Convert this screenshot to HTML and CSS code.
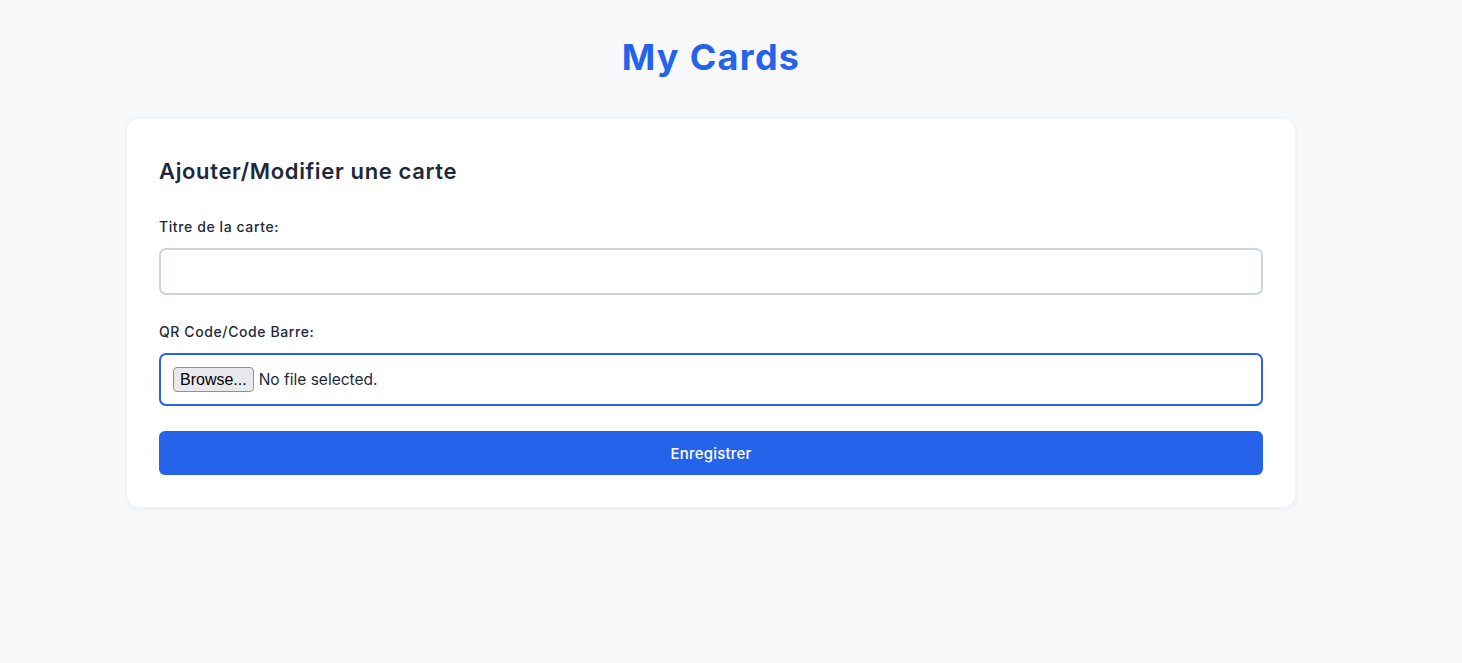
FILE: index.html
```html
<!DOCTYPE html>
<html lang="fr">
<head>
<meta charset="utf-8">
<title>My Cards</title>
<link rel="stylesheet" href="styles.css">
</head>
<body>
<main class="page">
  <h1 class="page-title">My Cards</h1>
  <section class="card">
    <h2 class="card-title">Ajouter/Modifier une carte</h2>
    <form class="form">
      <div class="field field-title">
        <label class="label" for="title">Titre de la carte:</label>
        <input class="text-input" id="title" type="text">
      </div>
      <div class="field field-file">
        <label class="label">QR Code/Code Barre:</label>
        <div class="file-input">
          <span class="browse-btn">Browse...</span>
          <span class="file-status">No file selected.</span>
        </div>
      </div>
      <button class="submit" type="button">Enregistrer</button>
    </form>
  </section>
</main>
</body>
</html>
```
FILE: styles.css
```css
* { box-sizing: border-box; }

html, body {
  margin: 0;
  padding: 0;
  background: #f8f9fb;
  font-family: Inter, "Noto Sans", "Liberation Sans", sans-serif;
  color: #1e293b;
}

.page {
  padding: 37px 40px 40px 0;
}

.page-title {
  margin: 0;
  text-align: center;
  font-size: 36px;
  line-height: 40px;
  font-weight: 700;
  letter-spacing: 1.3px;
  color: #2563eb;
  width: 1422px;
}

.card {
  width: 1168px;
  margin: 42px 0 0 127px;
  background: #ffffff;
  border-radius: 12px;
  padding: 32px;
  box-shadow: 0 1px 6px rgba(15, 23, 42, 0.07);
}

.card-title {
  margin: 0 0 26px;
  font-size: 22px;
  line-height: 40px;
  font-weight: 600;
  letter-spacing: 0.65px;
  color: #1e293b;
}

.form {
  display: flex;
  flex-direction: column;
}

.field {
  display: flex;
  flex-direction: column;
}

.field-title {
  margin-bottom: 27px;
}

.field-file {
  margin-bottom: 24px;
}

.label {
  font-size: 14px;
  line-height: 20px;
  font-weight: 500;
  letter-spacing: 0.6px;
  color: #1e293b;
  margin-bottom: 11px;
}

.text-input {
  height: 47px;
  width: 100%;
  border: 2px solid #cbd5e1;
  border-radius: 7px;
  background: #fff;
  font-family: inherit;
  font-size: 15px;
  padding: 0 12px;
  outline: none;
}

.file-input {
  height: 53px;
  border: 2px solid #2563eb;
  border-radius: 7px;
  background: #fff;
  display: flex;
  align-items: center;
  padding: 0 12px;
  gap: 5px;
}

.browse-btn {
  display: inline-flex;
  align-items: center;
  height: 25px;
  padding: 0 6px;
  background: #e9e9ed;
  border: 1px solid #8f8f9d;
  border-radius: 4px;
  font-family: "Liberation Sans", Arial, sans-serif;
  font-size: 16px;
  color: #000;
}

.file-status {
  font-size: 15.5px;
  color: #1e293b;
}

.submit {
  height: 44px;
  width: 100%;
  border: none;
  border-radius: 6px;
  background: #2563eb;
  color: #fff;
  font-family: inherit;
  font-size: 15px;
  font-weight: 500;
  letter-spacing: 0.2px;
  margin-top: 1px;
}
```
